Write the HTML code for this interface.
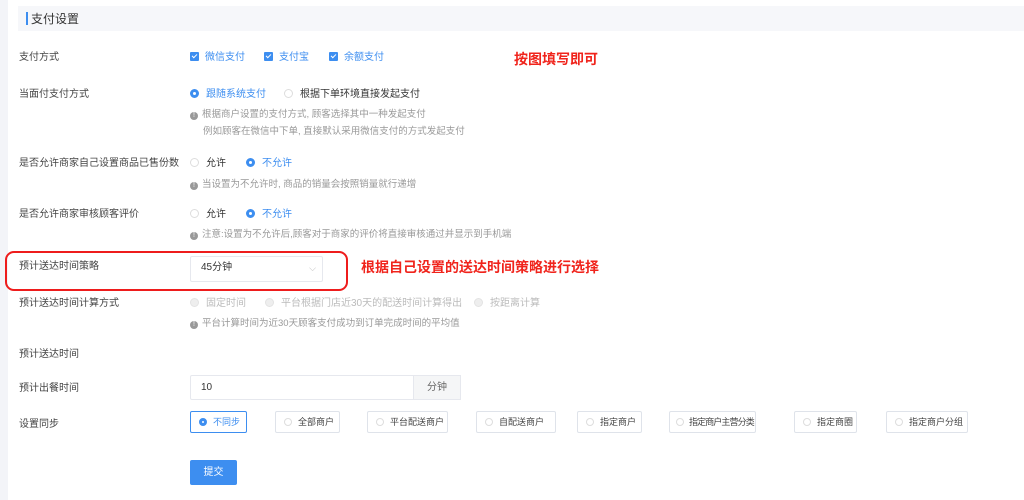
<!DOCTYPE html>
<html><head><meta charset="utf-8"><style>
body{margin:0;width:1024px;height:500px;background:#f3f4f8;font-family:"Liberation Sans","Noto Sans CJK SC",sans-serif;font-size:10px;color:#333;position:relative;overflow:hidden}
.panel{position:absolute;left:8px;top:0;width:1016px;height:500px;background:#fff}
.a{position:absolute;white-space:nowrap}
.hdr{position:absolute;left:18px;top:6px;width:1006px;height:25px;background:#f6f7fa}
.lbl{position:absolute;left:19px;color:#444}
.cb{display:inline-block;width:9px;height:9px;background:#3d8ef0;border-radius:1px;vertical-align:-1px;margin-right:6px;position:relative}
.cb:after{content:"";position:absolute;left:3px;top:1px;width:2px;height:4px;border:solid #fff;border-width:0 1.3px 1.3px 0;transform:rotate(45deg)}
.rd{display:inline-block;width:9px;height:9px;border-radius:50%;border:1px solid #ddd;box-sizing:border-box;vertical-align:-1px;margin-right:7px;background:#fff}
.rd.on{border:3px solid #3d8ef0}
.rd.dis{background:#eee;border-color:#e3e3e3}
.blue{color:#3d8ef0}
.hint{color:#999;font-size:9.5px}
.i{display:inline-block;width:8px;height:8px;border-radius:50%;background:#999;color:#fff;font-size:7px;text-align:center;line-height:8px;margin-right:4px;vertical-align:0}
.red{color:#f0241c;font-weight:bold;font-size:14px}
.btn{position:absolute;top:411px;height:22px;border:1px solid #dfe3ea;box-sizing:border-box;border-radius:2px;font-size:9px;line-height:20px;padding-left:8px;color:#444;background:#fff;white-space:nowrap;overflow:hidden}
.btn .rd{width:8px;height:8px;margin-right:6px}
</style></head><body>
<div class="panel"></div>
<div class="hdr"></div>
<div class="a" style="left:26px;top:12px;width:2px;height:13px;background:#3d8ef0"></div>
<div class="a" style="left:31px;top:10px;font-size:12px;color:#333">支付设置</div>

<div class="lbl a" style="top:48px">支付方式</div>
<div class="a" style="left:190px;top:48px" ><span class="cb"></span><span class="blue">微信支付</span></div>
<div class="a" style="left:264px;top:48px" ><span class="cb"></span><span class="blue">支付宝</span></div>
<div class="a" style="left:329px;top:48px" ><span class="cb"></span><span class="blue">余额支付</span></div>
<div class="a red" style="left:514px;top:49px">按图填写即可</div>

<div class="lbl a" style="top:85px">当面付支付方式</div>
<div class="a" style="left:190px;top:85px"><span class="rd on"></span><span class="blue">跟随系统支付</span></div>
<div class="a" style="left:284px;top:85px"><span class="rd"></span>根据下单环境直接发起支付</div>
<div class="a hint" style="left:190px;top:106px"><span class="i">!</span>根据商户设置的支付方式, 顾客选择其中一种发起支付</div>
<div class="a hint" style="left:203px;top:123px">例如顾客在微信中下单, 直接默认采用微信支付的方式发起支付</div>

<div class="lbl a" style="top:154px">是否允许商家自己设置商品已售份数</div>
<div class="a" style="left:190px;top:154px"><span class="rd"></span>允许</div>
<div class="a" style="left:246px;top:154px"><span class="rd on"></span><span class="blue">不允许</span></div>
<div class="a hint" style="left:190px;top:176px"><span class="i">!</span>当设置为不允许时, 商品的销量会按照销量就行递增</div>

<div class="lbl a" style="top:205px">是否允许商家审核顾客评价</div>
<div class="a" style="left:190px;top:205px"><span class="rd"></span>允许</div>
<div class="a" style="left:246px;top:205px"><span class="rd on"></span><span class="blue">不允许</span></div>
<div class="a hint" style="left:190px;top:226px"><span class="i">!</span>注意:设置为不允许后,顾客对于商家的评价将直接审核通过并显示到手机端</div>

<div class="a" style="left:5px;top:251px;width:339px;height:36px;border:2.5px solid #ee1c1c;border-radius:9px"></div>
<div class="lbl a" style="top:257px">预计送达时间策略</div>
<div class="a" style="left:190px;top:256px;width:133px;height:26px;border:1px solid #e6e8ee;box-sizing:border-box;border-radius:2px;padding:3px 0 0 10px;line-height:16px">45分钟<span style="position:absolute;right:6px;top:3px;color:#bbb;font-size:9px">⌵</span></div>
<div class="a red" style="left:361px;top:257px">根据自己设置的送达时间策略进行选择</div>

<div class="lbl a" style="top:294px">预计送达时间计算方式</div>
<div class="a" style="left:190px;top:294px;color:#bbb"><span class="rd dis"></span>固定时间</div>
<div class="a" style="left:265px;top:294px;color:#bbb"><span class="rd dis"></span>平台根据门店近30天的配送时间计算得出</div>
<div class="a" style="left:474px;top:294px;color:#bbb"><span class="rd dis"></span>按距离计算</div>
<div class="a hint" style="left:190px;top:315px"><span class="i">!</span>平台计算时间为近30天顾客支付成功到订单完成时间的平均值</div>

<div class="lbl a" style="top:345px">预计送达时间</div>

<div class="lbl a" style="top:379px">预计出餐时间</div>
<div class="a" style="left:190px;top:375px;width:271px;height:25px;border:1px solid #e6e8ee;box-sizing:border-box;border-radius:2px"></div>
<div class="a" style="left:201px;top:382px">10</div>
<div class="a" style="left:413px;top:375px;width:48px;height:25px;background:#f5f6f7;border:1px solid #e6e8ee;box-sizing:border-box;text-align:center;line-height:23px;color:#666">分钟</div>

<div class="lbl a" style="top:415px">设置同步</div>
<div class="btn" style="left:190px;width:57px;border-color:#3d8ef0;color:#3d8ef0"><span class="rd on"></span>不同步</div>
<div class="btn" style="left:275px;width:65px"><span class="rd"></span>全部商户</div>
<div class="btn" style="left:367px;width:81px"><span class="rd"></span>平台配送商户</div>
<div class="btn" style="left:476px;width:80px"><span class="rd"></span>自配送商户</div>
<div class="btn" style="left:577px;width:65px"><span class="rd"></span>指定商户</div>
<div class="btn" style="left:669px;width:87px;padding-left:6px;letter-spacing:-0.9px;overflow:visible"><span class="rd" style="margin-right:5px"></span>指定商户主营分类</div>
<div class="btn" style="left:794px;width:63px"><span class="rd"></span>指定商圈</div>
<div class="btn" style="left:886px;width:82px"><span class="rd"></span>指定商户分组</div>

<div class="a" style="left:190px;top:460px;width:47px;height:25px;background:#3d8ef0;border-radius:2px;color:#fff;text-align:center;line-height:25px">提交</div>
</body></html>
